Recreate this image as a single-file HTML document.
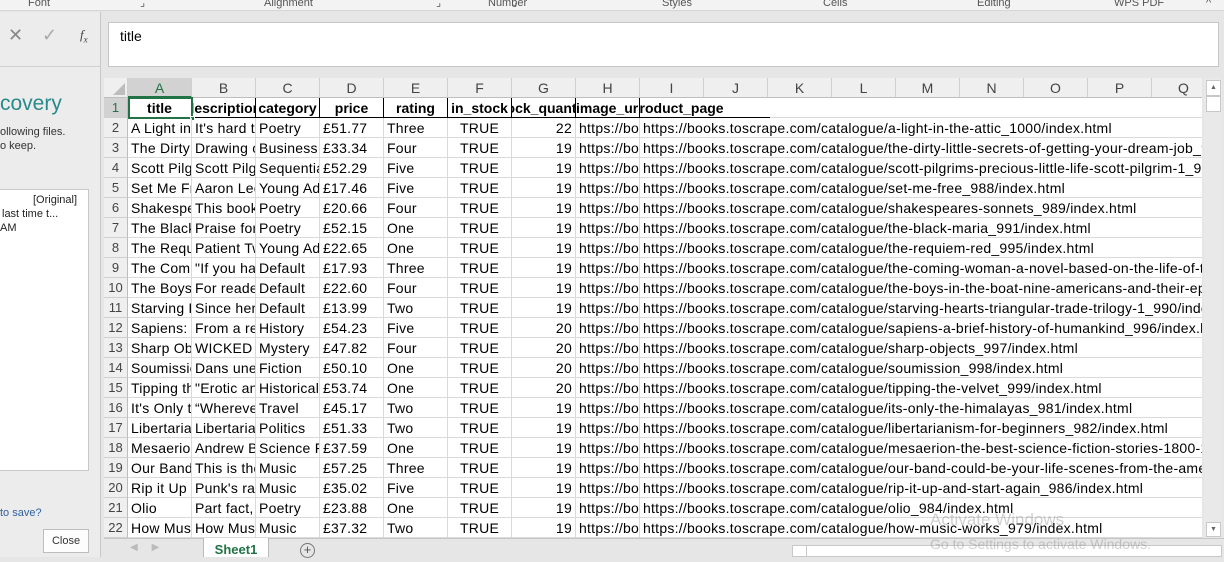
<!DOCTYPE html>
<html><head><meta charset="utf-8"><style>
*{margin:0;padding:0;box-sizing:border-box}
body{width:1224px;height:557px;overflow:hidden;background:#e6e6e6;font-family:"Liberation Sans",sans-serif;position:relative;color:#000}
.a{position:absolute}
.rib{left:0;top:0;width:1224px;height:11px;background:#f3f3f3;border-bottom:1px solid #d6d6d6;font-size:11px;color:#555;line-height:9px;overflow:hidden}
.rib span{position:absolute;top:-1px}
.grid{left:104px;top:78px;width:1098px;height:460px;background:#fff;overflow:hidden}
.ch{position:absolute;top:0;height:20px;background:#efefef;border-right:1px solid #d0d0d0;border-bottom:1px solid #bdbdbd;text-align:center;font-size:14px;line-height:20px;color:#444}
.rh{position:absolute;left:0;width:24px;height:20px;background:#efefef;border-bottom:1px solid #d0d0d0;border-right:1px solid #bdbdbd;text-align:center;font-size:13px;line-height:20px;color:#444}
.r{position:absolute;left:24px;height:20px;width:1080px;border-bottom:1px solid #dadada}
.c{position:absolute;top:0;height:20px;overflow:hidden;white-space:nowrap;font-size:14px;letter-spacing:.25px;line-height:20px;padding-left:3px;border-right:1px solid #dadada}
.rt{text-align:right;padding-right:3px}
.ct{text-align:center;padding:0}
.h1 .c{font-weight:bold;letter-spacing:0;border-right:1px solid #000;border-bottom:1px solid #000;display:flex;justify-content:center;padding:0;height:20px}
.url{overflow:visible;border-right:none}
</style></head><body>
<div class="a rib">
<span style="left:28px">Font</span><span style="left:140px">⌟</span>
<span style="left:264px">Alignment</span><span style="left:436px">⌟</span>
<span style="left:488px">Number</span><span style="left:512px">⌟</span>
<span style="left:662px">Styles</span><span style="left:823px">Cells</span>
<span style="left:977px">Editing</span><span style="left:1114px">WPS PDF</span><span style="left:1206px">^</span>
</div>
<div class="a" style="left:0;top:12px;width:101px;height:545px;background:#ececec;border-right:1px solid #c8c8c8"></div>
<div class="a" style="left:0;top:66px;width:101px;height:0;border-top:1px solid #d0d0d0"></div>
<div class="a" style="left:8px;top:25px;font-size:18px;color:#888">✕</div>
<div class="a" style="left:42px;top:25px;font-size:18px;color:#aaa">✓</div>
<div class="a" style="left:80px;top:27px;font-size:13px;font-style:italic;font-family:'Liberation Serif',serif;color:#444">f<sub style="font-size:9px">x</sub></div>
<div class="a" style="left:0;top:92px;font-size:21px;color:#2a8a8a">covery</div>
<div class="a" style="left:0;top:125px;font-size:11px;color:#333;line-height:14px">ollowing files.<br>o keep.</div>
<div class="a" style="left:0;top:189px;width:89px;height:282px;background:#fff;border:1px solid #c8c8c8;border-left:none;font-size:11px;line-height:14px;padding-top:3px;color:#222"><div style="padding-left:33px">[Original]</div><div style="padding-left:2px">last time t...</div><div>AM</div></div>
<div class="a" style="left:0;top:507px;font-size:11px;color:#3060a0">to save?</div>
<div class="a" style="left:43px;top:529px;width:46px;height:24px;background:#fdfdfd;border:1px solid #bdbdbd;font-size:11px;line-height:22px;text-align:center;color:#333">Close</div>
<div class="a" style="left:108px;top:22px;width:1111px;height:45px;background:#fff;border:1px solid #c6c6c6;font-size:14px;padding:5px 11px">title</div>
<div class="a grid">
<div class="ch" style="left:0;width:24px;background:#efefef"><svg width="12" height="12" style="position:absolute;right:2px;bottom:2px"><path d="M12 0L12 12L0 12Z" fill="#bdbdbd"/></svg></div>
<div class="ch" style="left:24px;width:64px;background:#d2d2d2;color:#217346;border-bottom:2px solid #217346">A</div>
<div class="ch" style="left:88px;width:64px">B</div><div class="ch" style="left:152px;width:64px">C</div><div class="ch" style="left:216px;width:64px">D</div><div class="ch" style="left:280px;width:64px">E</div><div class="ch" style="left:344px;width:64px">F</div><div class="ch" style="left:408px;width:64px">G</div><div class="ch" style="left:472px;width:64px">H</div><div class="ch" style="left:536px;width:64px">I</div><div class="ch" style="left:600px;width:64px">J</div><div class="ch" style="left:664px;width:64px">K</div><div class="ch" style="left:728px;width:64px">L</div><div class="ch" style="left:792px;width:64px">M</div><div class="ch" style="left:856px;width:64px">N</div><div class="ch" style="left:920px;width:64px">O</div><div class="ch" style="left:984px;width:64px">P</div><div class="ch" style="left:1048px;width:64px">Q</div>

<div class="rh" style="top:20px;background:#d2d2d2;color:#217346">1</div>
<div class="r h1" style="top:20px">
<div class="c" style="left:0;width:64px"><span>title</span></div>
<div class="c" style="left:64px;width:64px"><span>description</span></div>
<div class="c" style="left:128px;width:64px"><span>category</span></div>
<div class="c" style="left:192px;width:64px"><span>price</span></div>
<div class="c" style="left:256px;width:64px"><span>rating</span></div>
<div class="c" style="left:320px;width:64px"><span>in_stock</span></div>
<div class="c" style="left:384px;width:64px"><span>stock_quantity</span></div>
<div class="c" style="left:448px;width:64px;justify-content:flex-start"><span>image_url</span></div>
<div class="c" style="left:512px;width:130px;border-right:none;justify-content:flex-start"><span style="margin-left:-9px">product_page</span></div>
</div>
<div class="a" style="left:24px;top:19px;width:65px;height:22px;border:2px solid #217346"></div>
<div class="a" style="left:86px;top:38px;width:5px;height:5px;background:#217346;border:1px solid #fff"></div>

<div class="rh" style="top:40px">2</div><div class="r" style="top:40px"><div class="c" style="left:0;width:64px">A Light in the Attic</div><div class="c" style="left:64px;width:64px">It's hard to imagine</div><div class="c" style="left:128px;width:64px">Poetry</div><div class="c" style="left:192px;width:64px">£51.77</div><div class="c" style="left:256px;width:64px">Three</div><div class="c ct" style="left:320px;width:64px">TRUE</div><div class="c rt" style="left:384px;width:64px">22</div><div class="c" style="left:448px;width:64px">https://books</div><div class="c url" style="left:512px;width:600px">https://books.toscrape.com/catalogue/a-light-in-the-attic_1000/index.html</div></div>
<div class="rh" style="top:60px">3</div><div class="r" style="top:60px"><div class="c" style="left:0;width:64px">The Dirty Little</div><div class="c" style="left:64px;width:64px">Drawing on</div><div class="c" style="left:128px;width:64px">Business</div><div class="c" style="left:192px;width:64px">£33.34</div><div class="c" style="left:256px;width:64px">Four</div><div class="c ct" style="left:320px;width:64px">TRUE</div><div class="c rt" style="left:384px;width:64px">19</div><div class="c" style="left:448px;width:64px">https://books</div><div class="c url" style="left:512px;width:600px">https://books.toscrape.com/catalogue/the-dirty-little-secrets-of-getting-your-dream-job_994/index.html</div></div>
<div class="rh" style="top:80px">4</div><div class="r" style="top:80px"><div class="c" style="left:0;width:64px">Scott Pilgrim</div><div class="c" style="left:64px;width:64px">Scott Pilgrim</div><div class="c" style="left:128px;width:64px">Sequential Art</div><div class="c" style="left:192px;width:64px">£52.29</div><div class="c" style="left:256px;width:64px">Five</div><div class="c ct" style="left:320px;width:64px">TRUE</div><div class="c rt" style="left:384px;width:64px">19</div><div class="c" style="left:448px;width:64px">https://books</div><div class="c url" style="left:512px;width:600px">https://books.toscrape.com/catalogue/scott-pilgrims-precious-little-life-scott-pilgrim-1_987/index.html</div></div>
<div class="rh" style="top:100px">5</div><div class="r" style="top:100px"><div class="c" style="left:0;width:64px">Set Me Free</div><div class="c" style="left:64px;width:64px">Aaron Ledbetter</div><div class="c" style="left:128px;width:64px">Young Adult</div><div class="c" style="left:192px;width:64px">£17.46</div><div class="c" style="left:256px;width:64px">Five</div><div class="c ct" style="left:320px;width:64px">TRUE</div><div class="c rt" style="left:384px;width:64px">19</div><div class="c" style="left:448px;width:64px">https://books</div><div class="c url" style="left:512px;width:600px">https://books.toscrape.com/catalogue/set-me-free_988/index.html</div></div>
<div class="rh" style="top:120px">6</div><div class="r" style="top:120px"><div class="c" style="left:0;width:64px">Shakespeare</div><div class="c" style="left:64px;width:64px">This book is</div><div class="c" style="left:128px;width:64px">Poetry</div><div class="c" style="left:192px;width:64px">£20.66</div><div class="c" style="left:256px;width:64px">Four</div><div class="c ct" style="left:320px;width:64px">TRUE</div><div class="c rt" style="left:384px;width:64px">19</div><div class="c" style="left:448px;width:64px">https://books</div><div class="c url" style="left:512px;width:600px">https://books.toscrape.com/catalogue/shakespeares-sonnets_989/index.html</div></div>
<div class="rh" style="top:140px">7</div><div class="r" style="top:140px"><div class="c" style="left:0;width:64px">The Black Maria</div><div class="c" style="left:64px;width:64px">Praise for</div><div class="c" style="left:128px;width:64px">Poetry</div><div class="c" style="left:192px;width:64px">£52.15</div><div class="c" style="left:256px;width:64px">One</div><div class="c ct" style="left:320px;width:64px">TRUE</div><div class="c rt" style="left:384px;width:64px">19</div><div class="c" style="left:448px;width:64px">https://books</div><div class="c url" style="left:512px;width:600px">https://books.toscrape.com/catalogue/the-black-maria_991/index.html</div></div>
<div class="rh" style="top:160px">8</div><div class="r" style="top:160px"><div class="c" style="left:0;width:64px">The Requiem</div><div class="c" style="left:64px;width:64px">Patient Twenty</div><div class="c" style="left:128px;width:64px">Young Adult</div><div class="c" style="left:192px;width:64px">£22.65</div><div class="c" style="left:256px;width:64px">One</div><div class="c ct" style="left:320px;width:64px">TRUE</div><div class="c rt" style="left:384px;width:64px">19</div><div class="c" style="left:448px;width:64px">https://books</div><div class="c url" style="left:512px;width:600px">https://books.toscrape.com/catalogue/the-requiem-red_995/index.html</div></div>
<div class="rh" style="top:180px">9</div><div class="r" style="top:180px"><div class="c" style="left:0;width:64px">The Coming</div><div class="c" style="left:64px;width:64px">"If you have</div><div class="c" style="left:128px;width:64px">Default</div><div class="c" style="left:192px;width:64px">£17.93</div><div class="c" style="left:256px;width:64px">Three</div><div class="c ct" style="left:320px;width:64px">TRUE</div><div class="c rt" style="left:384px;width:64px">19</div><div class="c" style="left:448px;width:64px">https://books</div><div class="c url" style="left:512px;width:600px">https://books.toscrape.com/catalogue/the-coming-woman-a-novel-based-on-the-life-of-the-infamous</div></div>
<div class="rh" style="top:200px">10</div><div class="r" style="top:200px"><div class="c" style="left:0;width:64px">The Boys in</div><div class="c" style="left:64px;width:64px">For readers</div><div class="c" style="left:128px;width:64px">Default</div><div class="c" style="left:192px;width:64px">£22.60</div><div class="c" style="left:256px;width:64px">Four</div><div class="c ct" style="left:320px;width:64px">TRUE</div><div class="c rt" style="left:384px;width:64px">19</div><div class="c" style="left:448px;width:64px">https://books</div><div class="c url" style="left:512px;width:600px">https://books.toscrape.com/catalogue/the-boys-in-the-boat-nine-americans-and-their-epic-quest</div></div>
<div class="rh" style="top:220px">11</div><div class="r" style="top:220px"><div class="c" style="left:0;width:64px">Starving Hearts</div><div class="c" style="left:64px;width:64px">Since her</div><div class="c" style="left:128px;width:64px">Default</div><div class="c" style="left:192px;width:64px">£13.99</div><div class="c" style="left:256px;width:64px">Two</div><div class="c ct" style="left:320px;width:64px">TRUE</div><div class="c rt" style="left:384px;width:64px">19</div><div class="c" style="left:448px;width:64px">https://books</div><div class="c url" style="left:512px;width:600px">https://books.toscrape.com/catalogue/starving-hearts-triangular-trade-trilogy-1_990/index.html</div></div>
<div class="rh" style="top:240px">12</div><div class="r" style="top:240px"><div class="c" style="left:0;width:64px">Sapiens: A</div><div class="c" style="left:64px;width:64px">From a renowned</div><div class="c" style="left:128px;width:64px">History</div><div class="c" style="left:192px;width:64px">£54.23</div><div class="c" style="left:256px;width:64px">Five</div><div class="c ct" style="left:320px;width:64px">TRUE</div><div class="c rt" style="left:384px;width:64px">20</div><div class="c" style="left:448px;width:64px">https://books</div><div class="c url" style="left:512px;width:600px">https://books.toscrape.com/catalogue/sapiens-a-brief-history-of-humankind_996/index.html</div></div>
<div class="rh" style="top:260px">13</div><div class="r" style="top:260px"><div class="c" style="left:0;width:64px">Sharp Objects</div><div class="c" style="left:64px;width:64px">WICKED above</div><div class="c" style="left:128px;width:64px">Mystery</div><div class="c" style="left:192px;width:64px">£47.82</div><div class="c" style="left:256px;width:64px">Four</div><div class="c ct" style="left:320px;width:64px">TRUE</div><div class="c rt" style="left:384px;width:64px">20</div><div class="c" style="left:448px;width:64px">https://books</div><div class="c url" style="left:512px;width:600px">https://books.toscrape.com/catalogue/sharp-objects_997/index.html</div></div>
<div class="rh" style="top:280px">14</div><div class="r" style="top:280px"><div class="c" style="left:0;width:64px">Soumission</div><div class="c" style="left:64px;width:64px">Dans une</div><div class="c" style="left:128px;width:64px">Fiction</div><div class="c" style="left:192px;width:64px">£50.10</div><div class="c" style="left:256px;width:64px">One</div><div class="c ct" style="left:320px;width:64px">TRUE</div><div class="c rt" style="left:384px;width:64px">20</div><div class="c" style="left:448px;width:64px">https://books</div><div class="c url" style="left:512px;width:600px">https://books.toscrape.com/catalogue/soumission_998/index.html</div></div>
<div class="rh" style="top:300px">15</div><div class="r" style="top:300px"><div class="c" style="left:0;width:64px">Tipping the</div><div class="c" style="left:64px;width:64px">"Erotic and</div><div class="c" style="left:128px;width:64px">Historical</div><div class="c" style="left:192px;width:64px">£53.74</div><div class="c" style="left:256px;width:64px">One</div><div class="c ct" style="left:320px;width:64px">TRUE</div><div class="c rt" style="left:384px;width:64px">20</div><div class="c" style="left:448px;width:64px">https://books</div><div class="c url" style="left:512px;width:600px">https://books.toscrape.com/catalogue/tipping-the-velvet_999/index.html</div></div>
<div class="rh" style="top:320px">16</div><div class="r" style="top:320px"><div class="c" style="left:0;width:64px">It's Only the</div><div class="c" style="left:64px;width:64px">“Wherever</div><div class="c" style="left:128px;width:64px">Travel</div><div class="c" style="left:192px;width:64px">£45.17</div><div class="c" style="left:256px;width:64px">Two</div><div class="c ct" style="left:320px;width:64px">TRUE</div><div class="c rt" style="left:384px;width:64px">19</div><div class="c" style="left:448px;width:64px">https://books</div><div class="c url" style="left:512px;width:600px">https://books.toscrape.com/catalogue/its-only-the-himalayas_981/index.html</div></div>
<div class="rh" style="top:340px">17</div><div class="r" style="top:340px"><div class="c" style="left:0;width:64px">Libertarianism</div><div class="c" style="left:64px;width:64px">Libertarianism</div><div class="c" style="left:128px;width:64px">Politics</div><div class="c" style="left:192px;width:64px">£51.33</div><div class="c" style="left:256px;width:64px">Two</div><div class="c ct" style="left:320px;width:64px">TRUE</div><div class="c rt" style="left:384px;width:64px">19</div><div class="c" style="left:448px;width:64px">https://books</div><div class="c url" style="left:512px;width:600px">https://books.toscrape.com/catalogue/libertarianism-for-beginners_982/index.html</div></div>
<div class="rh" style="top:360px">18</div><div class="r" style="top:360px"><div class="c" style="left:0;width:64px">Mesaerion</div><div class="c" style="left:64px;width:64px">Andrew Barger</div><div class="c" style="left:128px;width:64px">Science Fiction</div><div class="c" style="left:192px;width:64px">£37.59</div><div class="c" style="left:256px;width:64px">One</div><div class="c ct" style="left:320px;width:64px">TRUE</div><div class="c rt" style="left:384px;width:64px">19</div><div class="c" style="left:448px;width:64px">https://books</div><div class="c url" style="left:512px;width:600px">https://books.toscrape.com/catalogue/mesaerion-the-best-science-fiction-stories-1800-1849_983/index.html</div></div>
<div class="rh" style="top:380px">19</div><div class="r" style="top:380px"><div class="c" style="left:0;width:64px">Our Band Could</div><div class="c" style="left:64px;width:64px">This is the</div><div class="c" style="left:128px;width:64px">Music</div><div class="c" style="left:192px;width:64px">£57.25</div><div class="c" style="left:256px;width:64px">Three</div><div class="c ct" style="left:320px;width:64px">TRUE</div><div class="c rt" style="left:384px;width:64px">19</div><div class="c" style="left:448px;width:64px">https://books</div><div class="c url" style="left:512px;width:600px">https://books.toscrape.com/catalogue/our-band-could-be-your-life-scenes-from-the-american-indie</div></div>
<div class="rh" style="top:400px">20</div><div class="r" style="top:400px"><div class="c" style="left:0;width:64px">Rip it Up and</div><div class="c" style="left:64px;width:64px">Punk's raw</div><div class="c" style="left:128px;width:64px">Music</div><div class="c" style="left:192px;width:64px">£35.02</div><div class="c" style="left:256px;width:64px">Five</div><div class="c ct" style="left:320px;width:64px">TRUE</div><div class="c rt" style="left:384px;width:64px">19</div><div class="c" style="left:448px;width:64px">https://books</div><div class="c url" style="left:512px;width:600px">https://books.toscrape.com/catalogue/rip-it-up-and-start-again_986/index.html</div></div>
<div class="rh" style="top:420px">21</div><div class="r" style="top:420px"><div class="c" style="left:0;width:64px">Olio</div><div class="c" style="left:64px;width:64px">Part fact, part</div><div class="c" style="left:128px;width:64px">Poetry</div><div class="c" style="left:192px;width:64px">£23.88</div><div class="c" style="left:256px;width:64px">One</div><div class="c ct" style="left:320px;width:64px">TRUE</div><div class="c rt" style="left:384px;width:64px">19</div><div class="c" style="left:448px;width:64px">https://books</div><div class="c url" style="left:512px;width:600px">https://books.toscrape.com/catalogue/olio_984/index.html</div></div>
<div class="rh" style="top:440px">22</div><div class="r" style="top:440px"><div class="c" style="left:0;width:64px">How Music</div><div class="c" style="left:64px;width:64px">How Music</div><div class="c" style="left:128px;width:64px">Music</div><div class="c" style="left:192px;width:64px">£37.32</div><div class="c" style="left:256px;width:64px">Two</div><div class="c ct" style="left:320px;width:64px">TRUE</div><div class="c rt" style="left:384px;width:64px">19</div><div class="c" style="left:448px;width:64px">https://books</div><div class="c url" style="left:512px;width:600px">https://books.toscrape.com/catalogue/how-music-works_979/index.html</div></div>
</div>
<div class="a" style="left:1204px;top:78px;width:18px;height:460px;background:#e9e9e9"></div>
<div class="a" style="left:1206px;top:80px;width:15px;height:16px;background:#fff;border:1px solid #c8c8c8;font-size:7px;text-align:center;line-height:14px;color:#666">▲</div>
<div class="a" style="left:1206px;top:96px;width:15px;height:16px;background:#fff;border:1px solid #c8c8c8"></div>
<div class="a" style="left:1206px;top:522px;width:15px;height:15px;background:#fff;border:1px solid #c8c8c8;font-size:7px;text-align:center;line-height:13px;color:#666">▼</div>
<div class="a" style="left:104px;top:538px;width:1120px;height:19px;background:#e6e6e6;border-top:1px solid #c6c6c6"></div>
<div class="a" style="left:130px;top:542px;font-size:10px;color:#bbb">◀&nbsp;&nbsp;&nbsp;&nbsp;&nbsp;▶</div>
<div class="a" style="left:203px;top:538px;width:66px;height:19px;background:#fff;border-left:1px solid #bbb;border-right:1px solid #bbb;font-size:13px;font-weight:bold;color:#217346;text-align:center;line-height:24px">Sheet1</div>
<div class="a" style="left:300px;top:543px;width:15px;height:15px;border:1px solid #777;border-radius:50%;font-size:13px;line-height:12px;text-align:center;color:#555">+</div>
<div class="a" style="left:792px;top:545px;width:430px;height:12px;background:#fff;border:1px solid #c8c8c8"></div>
<div class="a" style="left:806px;top:546px;width:1px;height:11px;background:#c8c8c8"></div>
<div class="a" style="left:930px;top:510px;font-size:17px;color:rgba(120,120,120,.35)">Activate Windows</div>
<div class="a" style="left:930px;top:536px;font-size:14px;color:rgba(120,120,120,.35)">Go to Settings to activate Windows.</div>
</body></html>
